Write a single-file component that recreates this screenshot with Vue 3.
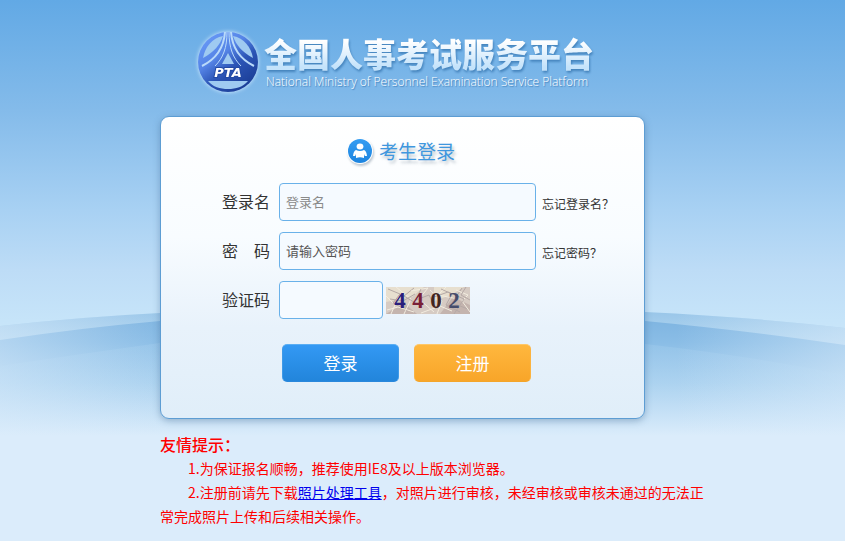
<template>
  <div class="login-page">
    <svg class="waves" viewBox="0 0 845 240" preserveAspectRatio="none" aria-hidden="true">
      <defs>
        <linearGradient id="waveBack" x1="0" y1="0" x2="0" y2="240" gradientUnits="userSpaceOnUse">
          <stop offset="0" stop-color="#8fc0e6" />
          <stop offset="0.18" stop-color="#b4d7f1" />
          <stop offset="0.5" stop-color="#dbecfb" />
        </linearGradient>
        <linearGradient id="waveFront" x1="0" y1="10" x2="0" y2="140" gradientUnits="userSpaceOnUse">
          <stop offset="0" stop-color="#7ab1df" />
          <stop offset="0.25" stop-color="#8abde6" />
          <stop offset="0.65" stop-color="#b8d9f2" />
          <stop offset="1" stop-color="#dbecfb" />
        </linearGradient>
        <linearGradient id="waveLow" x1="0" y1="30" x2="0" y2="136" gradientUnits="userSpaceOnUse">
          <stop offset="0" stop-color="#98c6ea" stop-opacity="0.5" />
          <stop offset="0.5" stop-color="#aad2f0" stop-opacity="0.5" />
          <stop offset="1" stop-color="#dbecfb" />
        </linearGradient>
        <linearGradient id="waveEdge" x1="0" y1="0" x2="1" y2="0">
          <stop offset="0" stop-color="#dbecfb" stop-opacity="0.5" />
          <stop offset="0.2" stop-color="#dbecfb" stop-opacity="0" />
          <stop offset="0.8" stop-color="#dbecfb" stop-opacity="0" />
          <stop offset="1" stop-color="#dbecfb" stop-opacity="0.5" />
        </linearGradient>
      </defs>
      <path d="M0 26Q80 17 160 13Q402 0 645 12Q750 17 845 28V240H0Z" fill="url(#waveBack)" />
      <path d="M0 40Q80 28 160 21Q402 3 645 21Q750 31 845 45V240H0Z" fill="url(#waveFront)" />
      <path d="M0 66Q80 54 160 43Q402 20 645 44Q750 56 845 75V240H0Z" fill="url(#waveLow)" />
      <path d="M0 26Q80 17 160 13Q402 0 645 12Q750 17 845 28V240H0Z" fill="url(#waveEdge)" />
    </svg>

    <main class="wrap">
      <header class="brand">
        <svg class="brand-logo" viewBox="0 0 68 68" role="img" aria-label="PTA">
          <defs>
            <linearGradient id="logoFill" x1="4" y1="10" x2="44" y2="64" gradientUnits="userSpaceOnUse">
              <stop offset="0" stop-color="#6a9bf8" />
              <stop offset="0.4" stop-color="#5584e6" />
              <stop offset="0.65" stop-color="#2c55b6" />
              <stop offset="1" stop-color="#1c3f98" />
            </linearGradient>
          </defs>
          <circle cx="34" cy="34" r="30" fill="url(#logoFill)" />
          <g fill="#9fcaf1">
            <path d="M29 8C26 17 20 24 9 30C11 19 18 10 29 8Z" />
            <path d="M39 8C42 17 48 24 59 30C57 19 50 10 39 8Z" />
            <path d="M34 25L40 36H28Z" />
            <path d="M14 53H54C49 59 42 61 34 61S19 59 14 53Z" />
          </g>
          <path d="M31 4C30 18 24 30 8 38M37 4C38 18 44 30 60 38" stroke="#b9dafa" stroke-width="2" fill="none" />
          <path d="M33 4C33 20 29 30 21 38M35 4C35 20 39 30 47 38" stroke="#b9dafa" fill="none" />
          <text class="logo-text" x="34" y="49" text-anchor="middle">PTA</text>
        </svg>
        <div class="brand-text">
          <h1>全国人事考试服务平台</h1>
          <p>National Ministry of Personnel Examination Service Platform</p>
        </div>
      </header>

      <form class="login-card" @submit.prevent>
        <h2 class="card-title">
          <svg class="user-icon" viewBox="0 0 26 26" aria-hidden="true">
            <defs>
              <linearGradient id="userFill" x1="0" y1="0" x2="0" y2="1">
                <stop offset="0" stop-color="#359df2" />
                <stop offset="1" stop-color="#1c84df" />
              </linearGradient>
            </defs>
            <circle cx="13" cy="13" r="13" fill="#fff" />
            <circle cx="13" cy="13" r="12" fill="url(#userFill)" />
            <ellipse cx="13" cy="8.5" rx="3.4" ry="3" fill="#fff" />
            <path d="M9 12Q13 14 17 12Q19.5 13 20 18H17.8L17 16V20Q13 18.5 9 20V16L8.2 18H6Q6.5 13 9 12Z" fill="#fff" />
          </svg>
          <span>考生登录</span>
        </h2>

        <div v-for="field in fields" :key="field.id" class="form-row">
          <label :for="field.id">{{ field.label }}</label>
          <input
            :id="field.id"
            v-model="form[field.id]"
            :type="field.type"
            :placeholder="field.placeholder"
            :class="field.id"
          />
          <a v-if="field.link" href="#" class="forgot">{{ field.link }}</a>
          <svg v-else class="captcha" viewBox="0 0 84 27" role="img" aria-label="验证码图片">
            <rect width="84" height="27" fill="#d6cbc3" />
            <path d="M0 0H38L26 10L0 15ZM48 0H78L65 8L48 14Z" fill="#e7dfcf" />
            <path d="M0 27L18 16L31 27ZM54 27L67 10L84 18V27Z" fill="#c4b4ae" />
            <path
              v-for="(line, i) in noise"
              :key="i"
              :d="line"
              :stroke="i % 2 ? '#b5a9a6' : '#f2ecdf'"
              fill="none"
            />
            <text
              v-for="(digit, i) in captcha"
              :key="digit.color"
              class="captcha-digit"
              :x="14 + i * 18"
              y="21"
              :fill="digit.color"
              text-anchor="middle"
            >{{ digit.value }}</text>
          </svg>
        </div>

        <div class="actions">
          <button type="submit" class="btn primary">登录</button>
          <button type="button" class="btn warning">注册</button>
        </div>
      </form>

      <section class="tips">
        <h3>友情提示：</h3>
        <p>1.为保证报名顺畅，推荐使用IE8及以上版本浏览器。</p>
        <p>2.注册前请先下载<a href="#">照片处理工具</a>，对照片进行审核，未经审核或审核未通过的无法正常完成照片上传和后续相关操作。</p>
      </section>
    </main>
  </div>
</template>

<script setup>
import { reactive } from 'vue'

const form = reactive({ username: '', password: '', code: '' })

const fields = [
  { id: 'username', label: '登录名', type: 'text', placeholder: '登录名', link: '忘记登录名？' },
  { id: 'password', label: '密　码', type: 'password', placeholder: '请输入密码', link: '忘记密码？' },
  { id: 'code', label: '验证码', type: 'text', placeholder: '', link: '' },
]

const captcha = [
  { value: '4', color: '#2a1f7c' },
  { value: '4', color: '#7a2037' },
  { value: '0', color: '#43261f' },
  { value: '2', color: '#464c6b' },
]

// 验证码干扰线
const noise = [
  'M0 9L9 18L5 27M10 0L25 12L18 27',
  'M2 2L14 7L7 16L22 24M28 1L18 9L31 17',
  'M25 4L42 1L33 12L48 25M1 23L12 20L28 25',
  'M35 2L30 13L43 8L50 22M4 12L17 14L29 7',
  'M44 3L56 14L51 27M60 0L52 8L72 12',
  'M55 2L66 7L60 18L74 25M76 1L66 16L82 22',
  'M70 3L82 8L76 14L84 25M35 26L54 19L66 24',
  'M48 10L62 5L78 12L68 27M80 0L75 8L84 13',
]
</script>

<style>
body {
  margin: 0;
}
</style>

<style scoped>
.login-page {
  position: relative;
  min-height: 100vh;
  box-sizing: border-box;
  padding: 28px 0 12px;
  font-family: "Noto Sans CJK SC", sans-serif;
  background: linear-gradient(to bottom, #62a9e5 0, #84bbea 110px, #a8d1f3 210px, #bddcf6 270px, #c6e4f9 320px, #dbecfb 430px);
}

.waves {
  position: absolute;
  top: 300px;
  left: 0;
  width: 100%;
  height: 240px;
}

.wrap {
  position: relative;
  box-sizing: border-box;
  max-width: 565px;
  margin: 0 auto;
  padding-left: 20px;
}

.brand {
  display: flex;
  align-items: flex-start;
  gap: 2px;
  padding-left: 34px;
}

.brand-logo {
  flex-shrink: 0;
  width: 68px;
  height: 68px;
  filter: drop-shadow(0 0 2px #d5ebff);
}

.logo-text {
  font-family: "DejaVu Sans", sans-serif;
  font-size: 13px;
  font-weight: 700;
  font-style: italic;
  fill: #fff;
  stroke: #234aa5;
  stroke-width: 2px;
  paint-order: stroke;
}

.brand-text {
  white-space: nowrap;
}

.brand-text h1 {
  margin: 5px 0 1px;
  font-size: 33px;
  line-height: 40px;
  font-weight: 900;
  color: transparent;
  background: linear-gradient(to bottom, #fff 20%, #c4e3fb 85%);
  background-clip: text;
  filter: drop-shadow(1px 2px 1px #4584bd);
}

.brand-text p {
  margin: 0;
  padding-left: 2px;
  font-family: "Open Sans", sans-serif;
  font-size: 12px;
  line-height: 16px;
  font-weight: 350;
  color: #fff;
  text-shadow: 1px 1px 1px #3f7fb9;
}

.login-card {
  box-sizing: border-box;
  max-width: 485px;
  margin-top: 20px;
  padding: 20px 20px 36px 61px;
  border: 1px solid #5d9dd3;
  border-radius: 9px;
  background: linear-gradient(to bottom, #fff 0, #f8fcff 40%, #e8f2fb 70%, #e0eef9 100%);
  box-shadow: 0 2px 7px rgba(60, 100, 140, 0.4);
}

.card-title {
  display: flex;
  align-items: center;
  gap: 6px;
  margin: 0 0 18px;
  padding-left: 125px;
  font-size: 19px;
  line-height: 28px;
  font-weight: 400;
  color: #3f97de;
}

.card-title span {
  text-shadow: 2px 3px 3px rgba(100, 120, 140, 0.4);
}

.user-icon {
  width: 26px;
  height: 26px;
  filter: drop-shadow(1px 2px 1px rgba(100, 120, 140, 0.4));
}

.form-row {
  display: flex;
  align-items: center;
  margin-bottom: 11px;
}

.form-row label {
  flex-shrink: 0;
  width: 57px;
  padding-bottom: 2px;
  font-size: 16px;
  line-height: 24px;
  color: #333;
}

.form-row input {
  box-sizing: border-box;
  width: 257px;
  min-width: 0;
  height: 38px;
  padding: 0 6px 2px;
  border: 1px solid #69b1e9;
  border-radius: 4px;
  background: #f5faff;
  font-family: inherit;
  font-size: 13px;
  color: #333;
  outline: none;
}

.form-row input::placeholder {
  color: #8a8a8a;
}

.form-row input.password::placeholder {
  color: #555;
}

.form-row input.code {
  width: 104px;
}

.forgot {
  flex-shrink: 0;
  margin-left: 6px;
  padding-top: 3px;
  font-size: 12px;
  line-height: 16px;
  color: #333;
  text-decoration: none;
}

.captcha {
  flex-shrink: 0;
  width: 84px;
  height: 27px;
  margin-left: 3px;
}

.captcha-digit {
  font-family: "Liberation Serif", serif;
  font-size: 23px;
  font-weight: 700;
}

.actions {
  display: flex;
  gap: 15px;
  margin-top: 25px;
  padding-left: 60px;
}

.btn {
  width: 117px;
  height: 38px;
  padding: 0 0 2px;
  border: 1px solid transparent;
  border-radius: 5px;
  font-family: inherit;
  font-size: 17px;
  color: #fff;
  cursor: pointer;
}

.btn.primary {
  border-color: #5aaef3 #3f9ae8 #2a88dc;
  background: linear-gradient(to bottom, #3399f4, #2285db);
}

.btn.warning {
  border-color: #ffc766 #fbb340 #f4a52a;
  background: linear-gradient(to bottom, #ffb73e, #f8a529);
}

.tips {
  margin-top: 13px;
  font-size: 14px;
  line-height: 24px;
  color: #f00;
}

.tips h3 {
  margin: 0;
  font-size: 16px;
  font-weight: 500;
}

.tips p {
  margin: 0;
  text-indent: 28px;
}

.tips a {
  color: #00e;
}
</style>
